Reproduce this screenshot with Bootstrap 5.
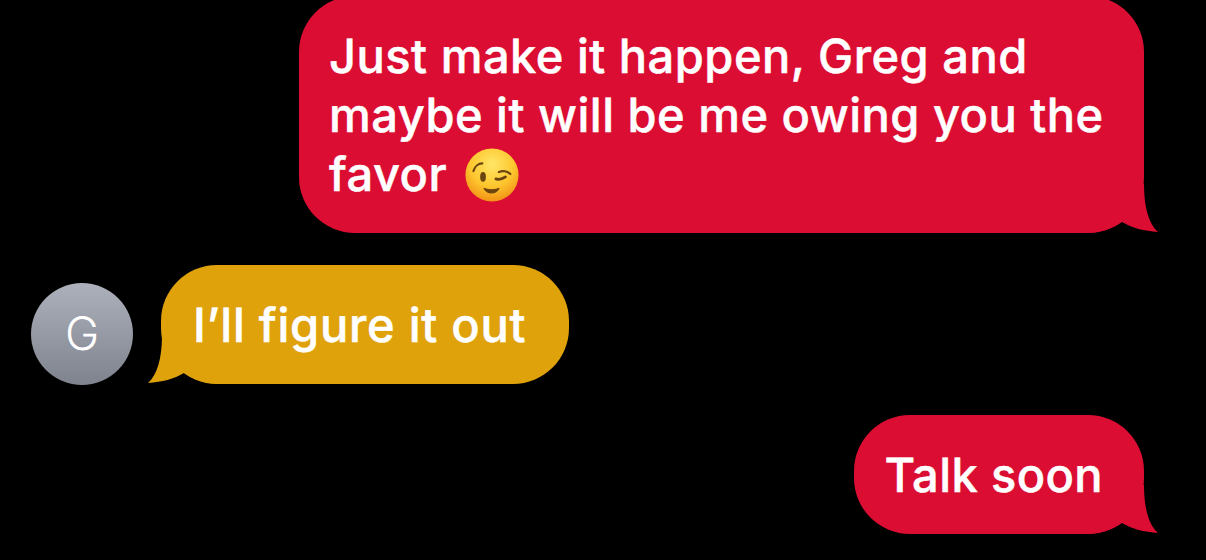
<!DOCTYPE html>
<html lang="en"><head><meta charset="utf-8"><title>Messages</title>
<link href="https://cdn.jsdelivr.net/npm/bootstrap@5.3.0/dist/css/bootstrap.min.css" rel="stylesheet">
<style>
html,body{height:100%;overflow:hidden}
body{background:#000;font-family:Inter,"Liberation Sans",sans-serif;text-rendering:geometricPrecision}
.thread{width:1206px;height:560px;margin-top:-4px;overflow:visible}
.out-row{padding-right:62px}
.in-row{padding-left:31px;gap:28px;margin-top:32px;margin-bottom:31px}
.bub{position:relative;isolation:isolate;padding:31px 41px 29px 30px;border-radius:56px;color:#fff;font-size:47px;font-weight:500;line-height:59px;-webkit-text-stroke:.5px #fff}
.bub-out{background:#dc0d33;letter-spacing:.4px}
.bub-in{background:#dfa20a;letter-spacing:.75px;padding-left:32px;padding-right:43px}
.bub-wide{width:845px;letter-spacing:.5px;padding-right:20px}
.tail{position:absolute;z-index:-1;bottom:-1px;width:80px;height:50px;display:block}
.bub-out .tail{right:-20px}
.bub-in .tail{left:-19px;transform:scaleX(-1)}
.avatar{width:102px;height:102px;border-radius:50%;background:linear-gradient(#adb1bc,#7e838e);color:#fff;font-size:46px;font-weight:300;margin-bottom:-1px}
.wink{width:56px;height:56px;vertical-align:-12px;margin-left:4px}
</style></head>
<body>
<div class="thread d-flex flex-column">
<div class="out-row d-flex justify-content-end">
<div class="bub bub-out bub-wide">Just make it happen, Greg and maybe it will be me owing you the favor <svg class="wink" viewBox="0 0 58 58" role="img" aria-label="winking face"><defs><radialGradient id="f" cx=".5" cy=".3" r=".75"><stop offset="0" stop-color="#ffe768"/><stop offset=".55" stop-color="#fdc62e"/><stop offset="1" stop-color="#f08a12"/></radialGradient></defs><circle cx="29" cy="29" r="27.5" fill="url(#f)"/><ellipse cx="19.7" cy="31" rx="3" ry="5" fill="#6b4410"/><path d="M9.7 25C11 20 15 17 19 17" fill="none" stroke="#6b4410" stroke-width="2.2" stroke-linecap="round"/><path d="M33 33C36 34 40 33 43 31" fill="none" stroke="#6b4410" stroke-width="2.8" stroke-linecap="round"/><path d="M36 26C40 24 45 25 48 28" fill="none" stroke="#6b4410" stroke-width="2.2" stroke-linecap="round"/><path d="M21 43C25 49 32 49 36 43C31 45 26 45 21 43Z" fill="#6b4410" stroke="#6b4410" stroke-width="1.4" stroke-linejoin="round"/></svg><svg class="tail" viewBox="0 0 80 50"><path d="M0 0H60C60 24 65 40 74 48C60 47 48 44 38 38C28 45 16 49 0 49Z" fill="#dc0d33"/></svg></div>
</div>
<div class="in-row d-flex align-items-end">
<div class="avatar d-flex align-items-center justify-content-center flex-shrink-0">G</div>
<div class="bub bub-in">I’ll figure it out<svg class="tail" viewBox="0 0 80 50"><path d="M0 0H60C60 24 65 40 74 48C60 47 48 44 38 38C28 45 16 49 0 49Z" fill="#dfa20a"/></svg></div>
</div>
<div class="out-row d-flex justify-content-end">
<div class="bub bub-out">Talk soon<svg class="tail" viewBox="0 0 80 50"><path d="M0 0H60C60 24 65 40 74 48C60 47 48 44 38 38C28 45 16 49 0 49Z" fill="#dc0d33"/></svg></div>
</div>
</div>
<script src="https://cdn.jsdelivr.net/npm/bootstrap@5.3.0/dist/js/bootstrap.bundle.min.js"></script>
</body></html>
